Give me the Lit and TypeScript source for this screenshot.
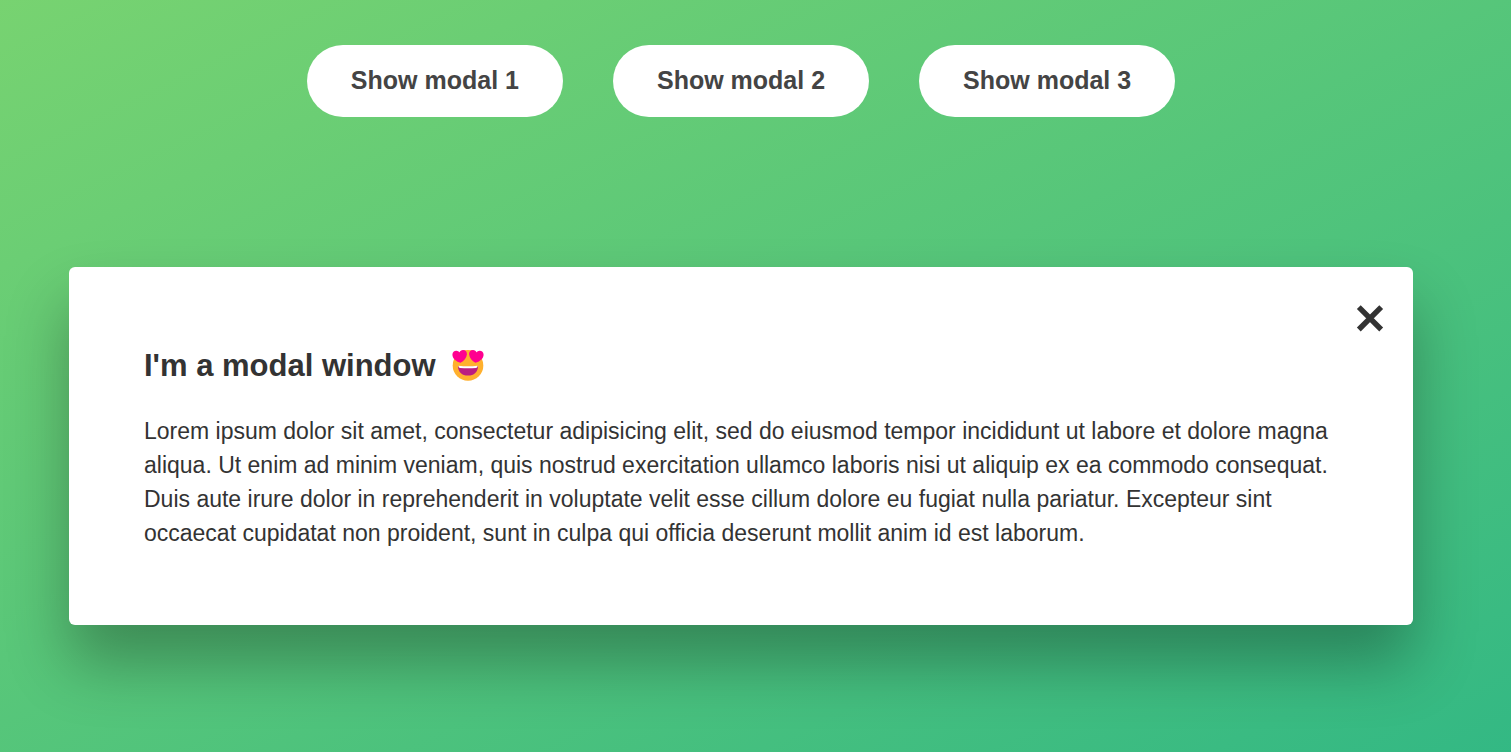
import { LitElement, html, css } from "lit";
import { customElement, state } from "lit/decorators.js";

@customElement("app-root")
export class AppRoot extends LitElement {
  static styles = css`
    :host {
      display: block;
      box-sizing: border-box;
      min-height: 100vh;
      padding: 45px 98px 45px 69px;
      font-family: Arial, "Liberation Sans", sans-serif;
      color: #333;
      background-color: #5bc97a;
      background-image: linear-gradient(to top left, #28b487, #7dd56f);
      background-size: 127% 123%;
      background-position: 54% 10%;
      background-repeat: no-repeat;
    }
    .triggers {
      display: flex;
      flex-wrap: wrap;
      justify-content: center;
      gap: 50px;
    }
    .show-modal {
      font-family: inherit;
      font-size: 25px;
      line-height: 28px;
      font-weight: 600;
      padding: 21px 44px 23px;
      border: none;
      border-radius: 125px;
      background: #fff;
      color: #444;
      cursor: pointer;
    }
    .modal {
      position: relative;
      margin-top: 150px;
      padding: 75px;
      border-radius: 6px;
      background: #fff;
      box-shadow: 0 38px 63px rgba(0, 0, 0, 0.3);
    }
    .close-modal {
      position: absolute;
      top: 33px;
      right: 25px;
      display: flex;
      padding: 0;
      border: none;
      background: none;
      color: #333;
      cursor: pointer;
    }
    .title {
      display: flex;
      align-items: center;
      gap: 15px;
      margin: 0 0 25px;
      font-size: 31px;
      line-height: 47px;
      font-weight: 700;
    }
    .text {
      margin: 0;
      font-size: 23px;
      line-height: 34px;
    }
  `;

  @state() private open = true;

  private show = () => {
    this.open = true;
  };

  private hide = () => {
    this.open = false;
  };

  render() {
    return html`
      <div class="triggers">
        ${[1, 2, 3].map(
          (n) => html`<button class="show-modal" type="button" @click=${this.show}>Show modal ${n}</button>`
        )}
      </div>
      ${this.open
        ? html`
            <section class="modal" role="dialog" aria-labelledby="title">
              <button class="close-modal" type="button" aria-label="Close" @click=${this.hide}>
                <svg width="36" height="36" viewBox="0 0 36 36" aria-hidden="true">
                  <path d="M6.8 7.1 29.2 29.5M29.2 7.1 6.8 29.5" stroke="currentColor" stroke-width="5.4" fill="none" />
                </svg>
              </button>
              <h1 class="title" id="title">
                <span>I'm a modal window</span>
                <svg width="34" height="34" viewBox="0 0 34 34" aria-hidden="true">
                  <circle cx="17" cy="16.4" r="15.3" fill="#ffb02e" />
                  <path d="M7 17.2Q17 18.2 27 17.2C27 22.8 23 26.6 17 26.6S7 22.8 7 17.2Z" fill="#bb1d80" />
                  <path d="M7.6 16.8Q17 17.8 26.4 16.8V17.7Q26.3 18.8 25 18.9Q17 19.8 9 18.9Q7.7 18.8 7.6 17.7Z" fill="#fff" />
                  <path
                    d="M9.6 13.8C5.4 12.8 1.4 9.4 1.4 5.7C1.4 3.2 3.3 1.6 5.4 1.7C6.8 1.8 7.8 2.4 8.4 3.4C8.9 1.9 10.3 0.9 12 0.9C14.6 0.9 16.2 2.9 15.9 5.5C15.5 9 13 12.2 9.6 13.8Z"
                    fill="#ff0090"
                  />
                  <path
                    d="M24.4 13.8C28.6 12.8 32.6 9.4 32.6 5.7C32.6 3.2 30.7 1.6 28.6 1.7C27.2 1.8 26.2 2.4 25.6 3.4C25.1 1.9 23.7 0.9 22 0.9C19.4 0.9 17.8 2.9 18.1 5.5C18.5 9 21 12.2 24.4 13.8Z"
                    fill="#ff0090"
                  />
                </svg>
              </h1>
              <p class="text">
                Lorem ipsum dolor sit amet, consectetur adipisicing elit, sed do eiusmod tempor incididunt ut labore et
                dolore magna aliqua. Ut enim ad minim veniam, quis nostrud exercitation ullamco laboris nisi ut aliquip
                ex ea commodo consequat. Duis aute irure dolor in reprehenderit in voluptate velit esse cillum dolore eu
                fugiat nulla pariatur. Excepteur sint occaecat cupidatat non proident, sunt in culpa qui officia deserunt
                mollit anim id est laborum.
              </p>
            </section>
          `
        : null}
    `;
  }
}
